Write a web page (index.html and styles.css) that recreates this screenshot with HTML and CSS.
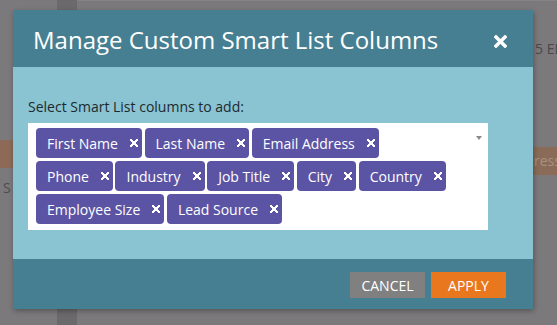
FILE: index.html
```html
<!DOCTYPE html>
<html>
<head>
<meta charset="utf-8">
<link rel="stylesheet" href="styles.css">
</head>
<body>
<div class="page">
  <div class="col-left">
    <div class="bar-left"></div>
    <div class="cell-s">S</div>
  </div>
  <div class="strip"></div>
  <div class="col-main">
    <div class="time">5 ED</div>
    <div class="bar-right"><span class="bar-text">ress,</span></div>
  </div>
</div>

<div class="modal">
  <div class="modal-head">
    <h1 class="modal-title">Manage Custom Smart List Columns</h1>
    <svg class="close" width="13" height="13" viewBox="0 0 13 13"><path d="M2 2 L11 11 M11 2 L2 11" stroke="#fff" stroke-width="3.4" stroke-linecap="square"/></svg>
  </div>
  <div class="modal-body">
    <div class="label">Select Smart List columns to add:</div>
    <div class="select">
      <div class="tags">
        <span class="tag">First Name<i class="x"></i></span>
        <span class="tag">Last Name<i class="x"></i></span>
        <span class="tag">Email Address<i class="x"></i></span>
        <span class="tag">Phone<i class="x"></i></span>
        <span class="tag">Industry<i class="x"></i></span>
        <span class="tag">Job Title<i class="x"></i></span>
        <span class="tag">City<i class="x"></i></span>
        <span class="tag">Country<i class="x"></i></span>
        <span class="tag">Employee Size<i class="x"></i></span>
        <span class="tag">Lead Source<i class="x"></i></span>
      </div>
      <span class="caret"></span>
    </div>
  </div>
  <div class="modal-foot">
    <button class="btn btn-cancel">CANCEL</button>
    <button class="btn btn-apply">APPLY</button>
  </div>
</div>
</body>
</html>
```

FILE: styles.css
```css
html, body {
  margin: 0;
  padding: 0;
}
body {
  width: 557px;
  height: 325px;
  overflow: hidden;
  position: relative;
  background: #7b797c;
  font-family: "Open Sans", "Noto Sans", sans-serif;
}
.page {
  display: grid;
  grid-template-columns: 57px 20px 1fr;
  height: 325px;
}
.col-left {
  padding-top: 140px;
}
.bar-left {
  height: 28px;
  background: #8c6a57;
}
.cell-s {
  margin-top: 10px;
  padding-left: 3px;
  font-size: 14px;
  line-height: 19px;
  color: #4f4d50;
}
.strip {
  background: #6c696d;
}
.col-main {
  border-top: 1px solid #858386;
  padding-top: 38px;
  overflow: hidden;
}
.time {
  padding-left: 458px;
  font-size: 14px;
  line-height: 19px;
  color: #4a484b;
  white-space: nowrap;
}
.bar-right {
  margin-top: 89px;
  height: 28px;
  background: #8a6b58;
  padding-left: 457px;
  white-space: nowrap;
  font-size: 14px;
  line-height: 28px;
  color: #a8927f;
}

.modal {
  position: absolute;
  left: 13px;
  top: 10px;
  width: 520px;
  box-shadow: 1px 2px 5px rgba(0, 0, 0, 0.3);
}
.modal-head {
  background: #477f92;
  height: 57px;
  box-sizing: border-box;
  padding: 13px 26px 0 20px;
  display: flex;
  align-items: flex-start;
  justify-content: space-between;
}
.modal-title {
  margin: 0;
  font-size: 24px;
  font-weight: 400;
  line-height: 33px;
  color: #fff;
}
.close {
  margin-top: 12px;
  display: block;
}
.modal-body {
  background: #8ac3d2;
  height: 192px;
  box-sizing: border-box;
  padding: 30px 45px 0 15px;
}
.label {
  font-size: 14px;
  line-height: 19px;
  color: #1c2a2e;
  margin-bottom: 7px;
}
.select {
  background: #fff;
  height: 107px;
  box-sizing: border-box;
  padding: 5px 8px 6px 8px;
  position: relative;
}
.tags {
  display: flex;
  flex-wrap: wrap;
  column-gap: 2.6px;
  row-gap: 3px;
  width: 416px;
}
.tag {
  display: inline-flex;
  align-items: center;
  height: 30px;
  box-sizing: border-box;
  padding: 0 4px 0 11px;
  background: #5b54a4;
  border-radius: 4px;
  color: #fff;
  font-size: 14px;
  white-space: nowrap;
}
.x {
  display: block;
  width: 8px;
  height: 8px;
  margin-left: 12px;
  background:
    linear-gradient(45deg, transparent 40%, #fff 40%, #fff 60%, transparent 60%),
    linear-gradient(-45deg, transparent 40%, #fff 40%, #fff 60%, transparent 60%);
}
.caret {
  position: absolute;
  right: 6px;
  top: 13px;
  width: 0;
  height: 0;
  border-left: 3.5px solid transparent;
  border-right: 3.5px solid transparent;
  border-top: 4px solid #8a8a8a;
}
.modal-foot {
  background: #477f92;
  height: 50px;
  box-sizing: border-box;
  padding: 13px 27px 0 0;
  display: flex;
  justify-content: flex-end;
  gap: 6px;
}
.btn {
  width: 75px;
  height: 26px;
  border: 0;
  padding: 0;
  font-family: "Open Sans", "Noto Sans", sans-serif;
  font-size: 14px;
  color: #fff;
  cursor: pointer;
}
.btn-cancel {
  background: #808080;
}
.btn-apply {
  background: #e8771e;
}
```
